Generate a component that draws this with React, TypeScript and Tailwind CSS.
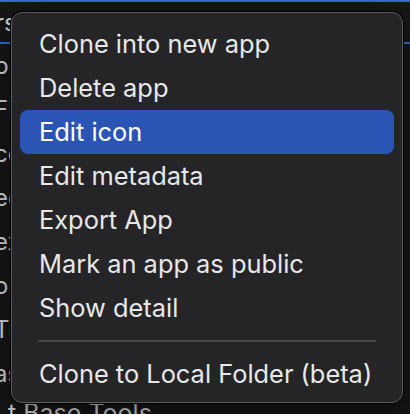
import React from "react";

const items = [
  "Clone into new app",
  "Delete app",
  "Edit icon",
  "Edit metadata",
  "Export App",
  "Mark an app as public",
  "Show detail",
];

const bgRows = ["pa", "Fi", "co", "ed", "ex", "on", "Tr", "as"];

export default function App() {
  return (
    <div
      className="relative w-[410px] h-[414px] overflow-hidden bg-[#161617] text-[#d4d4d6]"
      style={{ fontFamily: "Inter, 'Noto Sans', 'Liberation Sans', sans-serif" }}
    >
      {/* background list */}
      <div className="h-[2px] bg-[#2f6fd6]" />
      <div className="flex flex-col pt-[1px]">
        <div className="h-[39px] flex items-center text-[24px] leading-none -ml-[5px]">rs</div>
        <div className="h-[2px] bg-[#2f6fd6]" />
        {bgRows.map((t, i) => (
          <div key={i} className="h-[44px] flex items-center text-[24px] leading-none -ml-[6px]">
            {t}
          </div>
        ))}
        <div className="h-[30px] flex items-end text-[25px] leading-none pl-[8px]">
          t Base Tools
        </div>
      </div>

      {/* context menu */}
      <div className="absolute left-[11px] top-[12px] w-[392px] h-[391px] rounded-[11px] border border-[#5b5b5e] bg-[#252527] shadow-[0_0_0_1px_#000,0_10px_30px_rgba(0,0,0,0.5)] px-[8px] pt-[9px] pb-[6px] flex flex-col">
        {items.map((label, i) => (
          <div
            key={label}
            className={
              "h-[44px] flex items-center pl-[19px] rounded-[8px] text-[25.4px] leading-none " +
              (i === 2 ? "bg-[#2b55b5] text-white" : "text-[#e8e8ea]")
            }
          >
            {label}
          </div>
        ))}
        <div className="h-[22px] flex items-center px-[18px]">
          <div className="h-[2px] w-full bg-[#48484b]" />
        </div>
        <div className="h-[44px] flex items-center pl-[19px] text-[25.4px] leading-none text-[#e8e8ea]">
          Clone to Local Folder (beta)
        </div>
      </div>
    </div>
  );
}
